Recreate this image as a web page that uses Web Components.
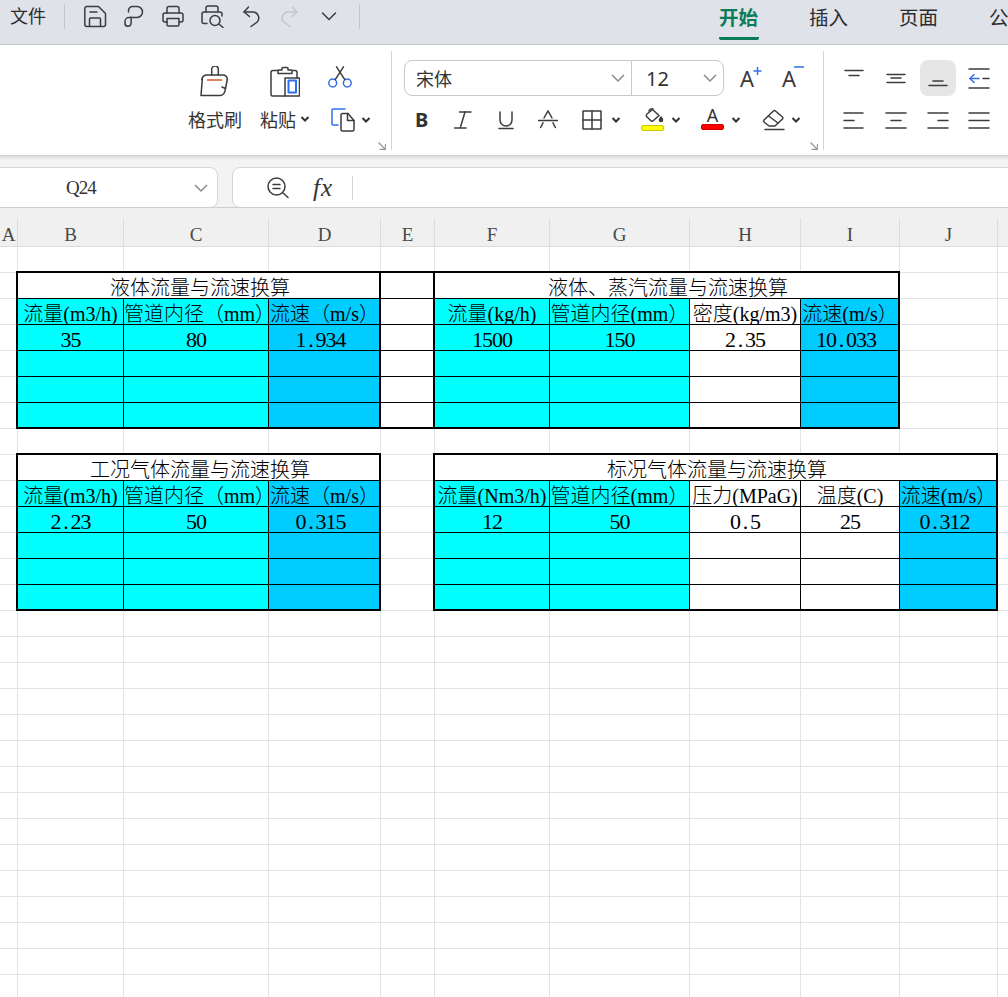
<!DOCTYPE html>
<html lang="zh">
<head>
<meta charset="utf-8">
<title>流量与流速换算</title>
<style>
  html, body { margin: 0; height: 100%; overflow: hidden; background: #fff; }
  body { font-family: "Noto Sans CJK SC", "Noto Sans", sans-serif; color: #333; }
</style>
</head>
<body>
<app-shell></app-shell>
<script>
const svg = (w, h, body, extra = '') =>
  `<svg width="${w}" height="${h}" viewBox="0 0 ${w} ${h}" fill="none" stroke="#3c3c3c" stroke-width="1.5" stroke-linecap="round" stroke-linejoin="round" ${extra}>${body}</svg>`;

const caret = `<svg class="caret" width="10" height="8" viewBox="0 0 10 8" fill="none" stroke="#333" stroke-width="2"><path d="M1.5 2 L5 5.5 L8.5 2"/></svg>`;
const chevron = `<svg width="16" height="10" viewBox="0 0 16 10" fill="none" stroke="#8a8a8a" stroke-width="1.5"><path d="M2 2 L8 8 L14 2"/></svg>`;
const lines = (a) => svg(36, 36, a.map(([x1, x2, y, c]) => `<path d="M${x1} ${y} H${x2}" ${c ? `stroke="${c}"` : ''}/>`).join(''));

class AppShell extends HTMLElement {
  connectedCallback() {
    this.attachShadow({ mode: 'open' });
    this.shadowRoot.innerHTML = `
      <style>
        :host { display: flex; flex-direction: column; width: 1008px; height: 997px; overflow: hidden; }
        wps-sheet { flex: 1; min-height: 0; }
      </style>
      <wps-titlebar></wps-titlebar>
      <wps-ribbon></wps-ribbon>
      <wps-formula-bar></wps-formula-bar>
      <wps-sheet></wps-sheet>
    `;
  }
}

class WpsTitlebar extends HTMLElement {
  connectedCallback() {
    this.attachShadow({ mode: 'open' });
    this.shadowRoot.innerHTML = `
      <style>
        :host {
          display: flex; align-items: flex-start; box-sizing: border-box;
          height: 45px; padding-left: 10px; overflow: hidden;
          background: #dfe2e9; border-bottom: 1px solid #c6c9cf;
          font-size: 18px; color: #2c2c2c;
        }
        .file { line-height: 24px; margin-top: 3px; width: 36px; flex: none; }
        .sep { width: 1px; height: 25px; margin: 4px 18px 0; background: #c3c6cc; flex: none; }
        .tools { display: flex; gap: 15px; margin-top: 4px; flex: none; }
        .tools svg { display: block; }
        .tabs { display: flex; gap: 50px; margin-left: 341px; flex: none; }
        .tab { width: 40px; white-space: nowrap; font-size: 19.5px; line-height: 26px; margin-top: 4px; }
        .tab.on { color: #0a7d58; font-weight: 700; height: 32.5px; border-bottom: 3px solid #0a7d58; border-radius: 0 0 2px 2px; }
      </style>
      <span class="file">文件</span>
      <i class="sep"></i>
      <div class="tools">
        ${svg(24, 24, '<path d="M3.8 2.5 H15.5 L22.5 9.5 V20.5 a2 2 0 0 1 -2 2 H3.8 a2 2 0 0 1 -2 -2 V4.5 a2 2 0 0 1 2 -2z"/><path d="M6.5 22 V15 a1 1 0 0 1 1 -1 H16.5 a1 1 0 0 1 1 1 V22"/><path d="M7 8 H14"/>')}
        ${svg(24, 24, '<path d="M6.5 8 V6.5 a4 4 0 0 1 4 -4 H15 a5.5 5.5 0 0 1 0 11 H7 a4 4 0 0 0 -4 4 v1.5 a3 3 0 0 0 6 0.5 c.6 -1.5 0 -4 0 -6.5"/>')}
        ${svg(24, 24, '<path d="M6 9 V4.5 a2 2 0 0 1 2 -2 H16 a2 2 0 0 1 2 2 V9"/><path d="M6 18 H4 a2 2 0 0 1 -2 -2 V11 a2 2 0 0 1 2 -2 H20 a2 2 0 0 1 2 2 V16 a2 2 0 0 1 -2 2 H18"/><path d="M6 14.5 H18 V20.5 a1.5 1.5 0 0 1 -1.5 1.5 H7.5 a1.5 1.5 0 0 1 -1.5 -1.5z"/>')}
        ${svg(24, 24, '<path d="M6 8 V4 a2 2 0 0 1 2 -2 H16 a2 2 0 0 1 2 2 V8"/><path d="M7 19.5 H4 a2 2 0 0 1 -2 -2 V10 a2 2 0 0 1 2 -2 H20 a2 2 0 0 1 2 2 v2"/><circle cx="15" cy="16.5" r="5"/><path d="M19 20 L23 23.5"/>')}
        ${svg(24, 24, '<path d="M9.5 3 L5 8 L10.5 12.5"/><path d="M5 8 H14 a6 6 0 0 1 4.2 10 L12 22.5"/>', 'stroke-width="1.8"')}
        ${svg(24, 24, '<path d="M14.5 3 L19 8 L13.5 12.5"/><path d="M19 8 H10 a6 6 0 0 0 -4.2 10 L12 22.5"/>', 'style="stroke:#c4c6ca"')}
        ${svg(24, 24, '<path d="M5.5 9 L12 15.5 L18.5 9"/>')}
      </div>
      <i class="sep"></i>
      <nav class="tabs">
        <span class="tab on">开始</span><span class="tab">插入</span><span class="tab">页面</span><span class="tab" style="width:20px">公</span>
      </nav>
    `;
  }
}

class RibbonGroup extends HTMLElement {
  connectedCallback() {
    this.attachShadow({ mode: 'open' });
    this.shadowRoot.innerHTML = `
      <style>
        :host { display: flex; flex-direction: column; box-sizing: border-box; height: 110px; flex: none; position: relative; }
        .body { flex: 1; }
        svg { align-self: flex-end; margin: 0 5px 5px 0; flex: none; }
      </style>
      <div class="body"><slot></slot></div>
      ${this.hasAttribute('launcher') ? `<svg width="8" height="8" viewBox="0 0 8 8" fill="none" stroke="#9a9a9a" stroke-width="1.3"><path d="M.5 .5 L7 7 M7.5 2 V7.5 H1.5"/></svg>` : ''}
    `;
  }
}

class WpsRibbon extends HTMLElement {
  connectedCallback() {
    this.attachShadow({ mode: 'open' });
    this.shadowRoot.innerHTML = `
      <style>
        :host {
          display: flex; box-sizing: border-box; height: 111px; background: #fff;
          border-bottom: 1px solid #cfd0d3; overflow: hidden; font-size: 18px; color: #333;
        }
        .sep { width: 1px; height: 99px; margin-top: 6px; background: #d4d4d4; flex: none; }
        .clip { display: flex; gap: 18px; padding: 21px 0 0 188px; width: 391px; box-sizing: border-box; }
        .col { display: flex; flex-direction: column; align-items: center; }
        .ico { height: 32px; margin-bottom: 9px; }
        .ico svg, .row svg, .cell svg { display: block; }
        .lab { display: flex; align-items: center; gap: 4px; line-height: 24px; white-space: nowrap; }
        .col3 { align-items: flex-start; }
        .col3 .copy { display: flex; align-items: center; gap: 6px; margin: 20px 0 0 3px; }
        .font { width: 431px; padding: 15px 0 0 12px; box-sizing: border-box; }
        .row { display: flex; align-items: center; height: 36px; }
        .box {
          display: flex; align-items: center; box-sizing: border-box; width: 320px; height: 36px;
          border: 1px solid #c9c9c9; border-radius: 8px;
        }
        .box .name { width: 227px; box-sizing: border-box; padding-left: 11px; display: flex; justify-content: space-between; align-items: center; padding-right: 5px; height: 100%; border-right: 1px solid #c9c9c9; }
        .box .size { flex: 1; box-sizing: border-box; padding: 0 5px 0 14px; display: flex; justify-content: space-between; align-items: center; font: 20px "Noto Sans", sans-serif; }
        .size-a { font-size: 22px; line-height: 24px; color: #3a3a3a; width: 14px; position: relative; margin-left: 16px; font-family: "Noto Sans", sans-serif; }
        .size-a + .size-a { margin-left: 28px; }
        .size-a svg { position: absolute; left: 12px; top: -1px; }
        .size-a + .size-a svg { left: 11px; top: -2px; }
        .row2 { margin-top: 6px; }
        .bold { font: 700 20px/24px "Noto Sans", sans-serif; color: #333; width: 13px; margin-left: 11px; }
        .row2 > svg { flex: none; }
        .pick { display: flex; flex-direction: column; align-items: center; width: 23px; height: 24px; }
        .bar { display: block; width: 23px; height: 6px; box-sizing: border-box; border-radius: 2px; flex: none; }
        .glyph { font: 18px/15px "Noto Sans", sans-serif; color: #333; height: 15px; margin-bottom: 1px; }
        .caret { flex: none; }
        .align { width: 185px; padding: 15px 0 0 12px; box-sizing: border-box; display: grid; grid-template-columns: repeat(4, 36px); grid-auto-rows: 36px; column-gap: 6px; row-gap: 6px; align-content: start; }
        .cell.on { background: #e6e6e6; border-radius: 8px; }
      </style>

      <ribbon-group launcher style="width:391px">
        <div class="clip">
          <div class="col">
            <div class="ico">${svg(30, 32, '<path d="M11.7 9 V3.3 a3.3 3.3 0 0 1 6.6 0 V9"/><path d="M1.7 13.5 C2.5 10.5 4.5 9 7 9 H23 C25.5 9 27 10.5 27.5 13.5"/><path d="M7.5 14 H21.5" stroke="#d4582a"/><path d="M2.3 13.5 L1 29.5 H20 C23 29.5 25 26.5 25.5 22.5 L27.3 13.5"/><path d="M25.5 22.5 L22 21"/>')}</div>
            <div class="lab">格式刷</div>
          </div>
          <div class="col">
            <div class="ico">${svg(30, 32, '<path d="M7 4.5 H3 a2 2 0 0 0 -2 2 V28.5 a1.5 1.5 0 0 0 1.5 1.5 H15"/><path d="M23 4.5 H25 a2 2 0 0 1 2 2 V12"/><path d="M8 7.5 V4 H12 V2.5 a1 1 0 0 1 1 -1 H17 a1 1 0 0 1 1 1 V4 H22 V7.5z"/><path d="M15 12 H29.5 V30 H15z"/><path d="M18.5 14.5 H26 V26.5 H18.5z" stroke="#2f6fed" stroke-width="2"/>')}</div>
            <div class="lab">粘贴 ${caret}</div>
          </div>
          <div class="col col3">
            ${svg(24, 22, '<circle cx="4.7" cy="17" r="3.9" stroke="#2f6fed"/><circle cx="19.3" cy="17" r="3.9" stroke="#2f6fed"/><path d="M7.2 13.7 L15.5 .8"/><path d="M16.8 13.7 L8.5 .8"/>')}
            <div class="copy">
              ${svg(24, 24, '<path d="M7 17 H2 a1 1 0 0 1 -1 -1 V2 a1 1 0 0 1 1 -1 H14" stroke="#2f6fed"/><path d="M10 7 a1.5 1.5 0 0 1 1.5 -1.5 H17 L23 12.5 V21.5 a1.5 1.5 0 0 1 -1.5 1.5 H11.5 a1.5 1.5 0 0 1 -1.5 -1.5z"/><path d="M16.5 5.5 V12.5 H23"/>')}
              ${caret}
            </div>
          </div>
        </div>
      </ribbon-group>
      <i class="sep"></i>

      <ribbon-group launcher style="width:431px">
        <div class="font">
          <div class="row">
            <div class="box">
              <div class="name"><span>宋体</span>${chevron}</div>
              <div class="size"><span>12</span>${chevron}</div>
            </div>
            <span class="size-a">A<svg width="12" height="12" viewBox="0 0 12 12" fill="none" stroke="#2f6fed" stroke-width="1.5"><path d="M5.5 2 V10 M1.5 6 H9.5"/></svg></span>
            <span class="size-a">A<svg width="12" height="12" viewBox="0 0 12 12" fill="none" stroke="#2f6fed" stroke-width="1.5"><path d="M1 3 H11"/></svg></span>
          </div>
          <div class="row row2">
            <span class="bold">B</span>
            ${svg(18, 20, '<path d="M5.5 2 H17"/><path d="M11 2 L6.5 17"/><path d="M.5 18 H12"/>', 'style="margin-left:26px"')}
            ${svg(16, 20, '<path d="M2 2 V10 a6 6 0 0 0 12 0 V2"/><path d="M1 18.5 H15"/>', 'style="margin-left:26px"')}
            ${svg(20, 20, '<path d="M6 8 L10 .8 L14 8"/><path d="M.5 10.5 H19.5"/><path d="M5 12.7 L2.7 17.5 M15 12.7 L17.3 17.5"/>', 'style="margin-left:24px"')}
            ${svg(20, 20, '<rect x="1" y="1" width="18" height="18"/><path d="M10 1 V19 M1 10 H19"/>', 'style="margin-left:24px"')}
            <span style="width:9px"></span>${caret}
            <span style="width:20px"></span>
            <div class="pick">
              ${svg(23, 17, '<path d="M6 6 L11.5 1.5 L18 7.5 L12.5 12.5 a2 2 0 0 1 -2.8 0 L6 9 a2 2 0 0 1 0 -3z"/><path d="M8 3 a3 3 0 0 1 4 -2"/><path d="M20 9 c1 1.5 1.5 2.3 1.5 3 a1.5 1.5 0 0 1 -3 0 c0 -.7 .5 -1.5 1.5 -3z" fill="#3c3c3c"/>')}
              <i class="bar" style="background:#ffff00;border:1px solid #c8c800"></i>
            </div>
            <span style="width:7px"></span>${caret}
            <span style="width:20px"></span>
            <div class="pick">
              <span class="glyph">A</span>
              <i class="bar" style="background:#f00;border:1px solid #c80000"></i>
            </div>
            <span style="width:7px"></span>${caret}
            <span style="width:20px"></span>
            ${svg(24, 22, '<path d="M3 11 L12.5 2 a1.5 1.5 0 0 1 2 0 L21.5 8 a1.5 1.5 0 0 1 0 2 L14 17 H8 L3 13 a1.5 1.5 0 0 1 0 -2z"/><path d="M7.5 7 L17 14"/><path d="M4 20.5 H23"/>')}
            <span style="width:6px"></span>${caret}
          </div>
        </div>
      </ribbon-group>
      <i class="sep"></i>

      <div class="align">
        <div class="cell">${lines([[9, 27, 10.5], [13, 23, 15.5]])}</div>
        <div class="cell">${lines([[9, 27, 14.5], [13, 23, 18], [9, 27, 22.5]])}</div>
        <div class="cell on">${lines([[13, 23, 21], [9, 27, 25.5]])}</div>
        <div class="cell">${svg(36, 36, '<path d="M7 9 H27 M7 28 H27 M21 18.5 H27" /><path d="M8 18.5 H17" stroke="#2f6fed"/><path d="M12 14.5 L8 18.5 L12 22.5" stroke="#2f6fed"/>')}</div>
        <div class="cell">${lines([[8, 27, 11], [8, 18, 18.5], [8, 27, 26]])}</div>
        <div class="cell">${lines([[8, 28, 11], [13, 23, 18.5], [8, 28, 26]])}</div>
        <div class="cell">${lines([[8, 28, 11], [18, 28, 18.5], [8, 28, 26]])}</div>
        <div class="cell">${lines([[7, 27, 11], [7, 27, 18.5], [7, 27, 26]])}</div>
      </div>
    `;
  }
}

class WpsFormulaBar extends HTMLElement {
  connectedCallback() {
    this.attachShadow({ mode: 'open' });
    this.shadowRoot.innerHTML = `
      <style>
        :host {
          display: flex; gap: 14px; box-sizing: border-box; height: 52px; padding-top: 11px;
          background: linear-gradient(#dadada, #f3f3f3 4px); border-bottom: 1px solid #cfcfcf; overflow: hidden;
        }
        .name {
          display: flex; align-items: center; box-sizing: border-box; width: 228px; height: 41px; margin-left: -10px; flex: none;
          background: #fff; border: 1px solid #d6d6d6; border-radius: 8px; padding: 0 8px 0 75px;
          font: 19px "Liberation Serif", serif; letter-spacing: -1px; color: #333; justify-content: space-between;
        }
        .box {
          display: flex; align-items: center; box-sizing: border-box; width: 800px; height: 41px; flex: none;
          background: #fff; border: 1px solid #d6d6d6; border-radius: 8px; padding-left: 34px;
        }
        .fx { font: italic 25px "Liberation Serif", serif; color: #333; margin-left: 24px; width: 22px; letter-spacing: 1px; line-height: 28px; }
        .sep { width: 1px; height: 24px; background: #d6d6d6; margin-left: 17px; }
      </style>
      <div class="name"><span>Q24</span>${chevron}</div>
      <div class="box">
        ${svg(22, 22, '<circle cx="9.5" cy="9.5" r="8.5"/><path d="M6 7.5 H13 M6 11.5 H13"/><path d="M16 16 L21 20.5"/>')}
        <span class="fx">fx</span>
        <i class="sep"></i>
      </div>
    `;
  }
}

class SheetCell extends HTMLElement {
  connectedCallback() {
    this.attachShadow({ mode: 'open' });
    this.shadowRoot.innerHTML = `
      <style>
        :host {
          display: flex; align-items: flex-end; justify-content: center; box-sizing: border-box; min-width: 0;
          border-right: 1px solid #000; border-bottom: 1px solid #000; background: #fff; color: #000;
          font: 300 20px/20px "Liberation Serif", "Noto Sans CJK SC", serif; white-space: nowrap;
        }
        :host([kind="cyan"]) { background: #00ffff; }
        :host([kind="blue"]) { background: #00ccff; }
        :host([span]) { grid-column: 1 / -1; padding-left: 2px; }
        :host([start]) { justify-content: flex-start; }
        :host([num]) { font-size: 22px; letter-spacing: -1px; }
        :host([num][kind="blue"]) { padding-right: 8px; }
        span { display: block; }
      </style>
      <span><slot></slot></span>
    `;
  }
}

class SheetTable extends HTMLElement {
  connectedCallback() {
    this.attachShadow({ mode: 'open' });
    this.shadowRoot.innerHTML = `
      <style>
        :host { display: grid; grid-auto-rows: 26px; position: relative; z-index: 1; }
        .frame { position: absolute; inset: -2px 0 0 -2px; border: 2px solid #000; pointer-events: none; z-index: 2; }
      </style>
      <slot></slot>
      <div class="frame"></div>
    `;
    this.style.gridTemplateColumns = this.getAttribute('cols').split(' ').map((w) => w + 'px').join(' ');
  }
}

const COLS = [18, 106, 145, 112, 54, 115, 140, 111, 99, 98, 11];
const LETTERS = 'ABCDEFGHIJ';

// numbers use half-width glyphs in the original, so the point gets padded out
const num = (v) => v.replace('.', '<span style="padding:0 2.75px">.</span>');

const TABLES = [
  { col: 2, row: 2, kinds: ['cyan', 'cyan', 'blue'], widths: [106, 145, 112],
    title: '液体流量与流速换算',
    head: ['流量(m3/h)', '管道内径（mm）', '流速（m/s）'], vals: ['35', '80', '1.934'] },
  { col: 5, row: 2, kinds: [''], widths: [54], blank: true },
  { col: 6, row: 2, kinds: ['cyan', 'cyan', '', 'blue'], widths: [115, 140, 111, 99],
    title: '液体、蒸汽流量与流速换算',
    head: ['流量(kg/h)', '管道内径(mm）', '密度(kg/m3)', '流速(m/s）'], vals: ['1500', '150', '2.35', '10.033'] },
  { col: 2, row: 9, kinds: ['cyan', 'cyan', 'blue'], widths: [106, 145, 112],
    title: '工况气体流量与流速换算',
    head: ['流量(m3/h)', '管道内径（mm）', '流速（m/s）'], vals: ['2.23', '50', '0.315'] },
  { col: 6, row: 9, kinds: ['cyan', 'cyan', '', '', 'blue'], widths: [115, 140, 111, 99, 98],
    title: '标况气体流量与流速换算',
    head: ['流量(Nm3/h)', '管道内径(mm）', '压力(MPaG)', '温度(C)', '流速(m/s）'], vals: ['12', '50', '0.5', '25', '0.312'] },
];

function tableHtml(t) {
  const n = t.widths.length;
  const rows = t.blank
    ? '<sheet-cell></sheet-cell>'.repeat(6)
    : `<sheet-cell span>${t.title}</sheet-cell>` +
      t.head.map((h, i) => `<sheet-cell kind="${t.kinds[i]}" ${h.includes('（mm') ? 'start' : ''}>${h}</sheet-cell>`).join('') +
      t.vals.map((v, i) => `<sheet-cell num kind="${t.kinds[i]}">${num(v)}</sheet-cell>`).join('') +
      `<sheet-cell kind="${t.kinds.join('"></sheet-cell><sheet-cell kind="')}"></sheet-cell>`.repeat(3);
  return `<sheet-table cols="${t.widths.join(' ')}" style="grid-column:${t.col} / span ${n};grid-row:${t.row} / span 6">${rows}</sheet-table>`;
}

class WpsSheet extends HTMLElement {
  connectedCallback() {
    this.attachShadow({ mode: 'open' });
    let base = '';
    for (let r = 1; r <= 29; r++) {
      for (let c = 1; c <= 11; c++) {
        base += `<i style="grid-row:${r};grid-column:${c}"></i>`;
      }
    }
    this.shadowRoot.innerHTML = `
      <style>
        :host { display: block; overflow: hidden; background: #fff; }
        .head { display: grid; grid-template-columns: ${COLS.map((w) => w + 'px').join(' ')}; height: 39px; box-sizing: border-box; padding-top: 10px; background: #f0f0f0; border-bottom: 1px solid #dcdcdc; }
        .head b {
          font: 400 19px/33px "Liberation Serif", serif; color: #4a4a4a; text-align: center; height: 28px;
          border-right: 1px solid #dcdcdc; box-sizing: border-box;
        }
        .grid { display: grid; grid-template-columns: ${COLS.map((w) => w + 'px').join(' ')}; grid-auto-rows: 26px; }
        i { display: block; box-sizing: border-box; border-right: 1px solid #e4e4e4; border-bottom: 1px solid #e4e4e4; }
      </style>
      <div class="head">
        ${[...LETTERS].map((l) => `<b>${l}</b>`).join('')}<b style="border:0"></b>
      </div>
      <div class="grid">
        ${base}
        ${TABLES.map(tableHtml).join('')}
      </div>
    `;
  }
}

customElements.define('sheet-cell', SheetCell);
customElements.define('sheet-table', SheetTable);
customElements.define('ribbon-group', RibbonGroup);
customElements.define('wps-titlebar', WpsTitlebar);
customElements.define('wps-ribbon', WpsRibbon);
customElements.define('wps-formula-bar', WpsFormulaBar);
customElements.define('wps-sheet', WpsSheet);
customElements.define('app-shell', AppShell);
</script>
</body>
</html>
